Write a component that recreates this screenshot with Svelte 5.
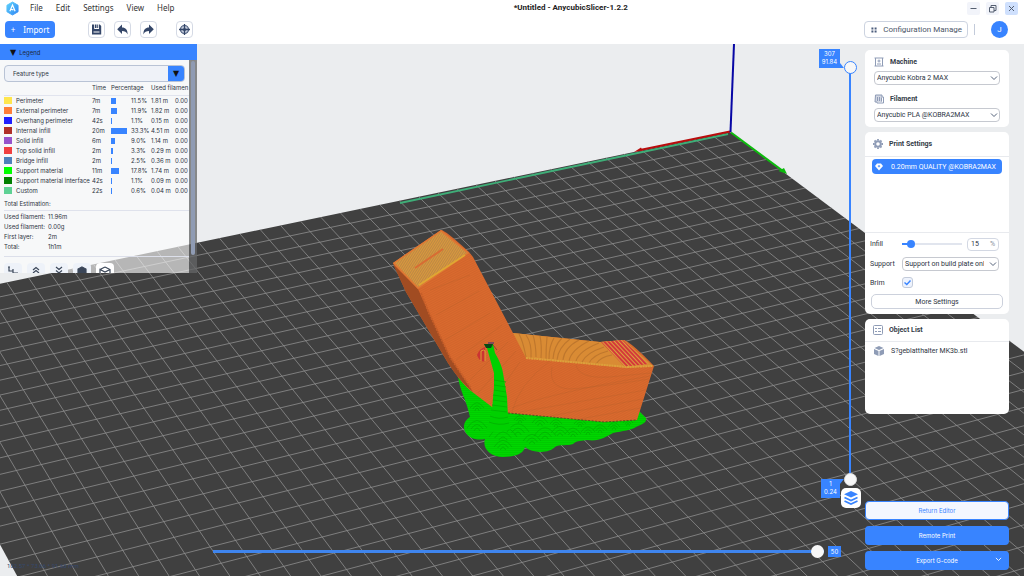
<script>
  const features = [
    { name: 'Perimeter', color: '#ffe64d', time: '7m', bar: 5, pct: '11.5%', len: '1.81 m' },
    { name: 'External perimeter', color: '#ff7d38', time: '7m', bar: 6, pct: '11.9%', len: '1.82 m' },
    { name: 'Overhang perimeter', color: '#1f1fff', time: '42s', bar: 1, pct: '1.1%', len: '0.15 m' },
    { name: 'Internal infill', color: '#b03029', time: '20m', bar: 16, pct: '33.3%', len: '4.51 m' },
    { name: 'Solid infill', color: '#9654cc', time: '6m', bar: 4, pct: '9.0%', len: '1.14 m' },
    { name: 'Top solid infill', color: '#f04040', time: '2m', bar: 2, pct: '3.3%', len: '0.29 m' },
    { name: 'Bridge infill', color: '#4d80ba', time: '2m', bar: 1, pct: '2.5%', len: '0.36 m' },
    { name: 'Support material', color: '#00ff00', time: '11m', bar: 8, pct: '17.8%', len: '1.74 m' },
    { name: 'Support material interface', color: '#008000', time: '42s', bar: 1, pct: '1.1%', len: '0.09 m' },
    { name: 'Custom', color: '#5ed194', time: '22s', bar: 1, pct: '0.6%', len: '0.04 m' }
  ];
  const totals = [
    ['Used filament:', '11.96m'],
    ['Used filament:', '0.00g'],
    ['First layer:', '2m'],
    ['Total:', '1h1m']
  ];

  // Perspective projection of the print bed: two vanishing points and a per-cell step.
  const origin = [730, 132];
  const vanishX = [6533, -1075];
  const vanishY = [-884, -1075];
  const stepX = -0.002995;
  const stepY = -0.0074;
  const cellsX = 43;
  const cellsY = 43;
  function project(u, v) {
    const a = stepX * u;
    const b = stepY * v;
    const w = 1 + a + b;
    return [0, 1].map((i) => (origin[i] + a * vanishX[i] + b * vanishY[i]) / w);
  }
  const pt = (u, v) => project(u, v).map((n) => n.toFixed(1)).join(' ');
  const bed = `M${pt(0, 0)}L${pt(cellsX, 0)}L${pt(cellsX, cellsY)}L${pt(0, cellsY)}Z`;
  let grid = '';
  for (let i = 1; i < cellsX; i++) grid += `M${pt(i, 0)}L${pt(i, cellsY)}`;
  for (let i = 1; i < cellsY; i++) grid += `M${pt(0, i)}L${pt(cellsX, i)}`;

  const blobs = [
    [477, 428, 10], [503, 437, 14], [500, 420, 8], [518, 432, 11], [532, 441, 9], [545, 436, 11],
    [540, 423, 8], [560, 433, 9], [573, 434, 8], [588, 432, 7], [600, 430, 7], [614, 427, 6],
    [628, 423, 5], [520, 420, 6], [477, 408, 7], [503, 447, 9], [556, 424, 6], [580, 424, 6]
  ];

  let topLayer = $state(307);
  let bottomLayer = $state(1);
  let move = $state(50);
  let infill = $state(15);
  let brim = $state(true);
</script>

<div class="app">
  <header>
    <div class="menubar">
      <svg class="logo" viewBox="0 0 14 15" aria-hidden="true">
        <defs><linearGradient id="lg" x1="0" x2="1" y2="1"><stop offset="0" stop-color="#5fd3fb" /><stop offset="1" stop-color="#2f86f5" /></linearGradient></defs>
        <path d="M7 .5 13 4v7L7 14.500 1 11V4Z" fill="url(#lg)" stroke="url(#lg)" stroke-linejoin="round" />
        <path d="M4.200 10.500 7 3.800 9.800 10.500M5.600 8.500 8 9" fill="none" stroke="#fff" stroke-width="1.300" />
      </svg>
      <nav><a href="#file">File</a><a href="#edit">Edit</a><a href="#settings">Settings</a><a href="#view">View</a><a href="#help">Help</a></nav>
      <h1>*Untitled - AnycubicSlicer-1.2.2</h1>
      <div class="win">
        <button aria-label="Minimize"><svg viewBox="0 0 13 13"><path d="M3.500 6.500h6" /></svg></button>
        <button aria-label="Restore"><svg viewBox="0 0 13 13"><path d="M3.500 5.500h4.500v4.500H3.500ZM5 5.500V3.500h5V8.500H8" /></svg></button>
        <button class="close" aria-label="Close"><svg viewBox="0 0 13 13"><path d="m4 4 5 5m0-5-5 5" /></svg></button>
      </div>
    </div>
    <div class="toolbar">
      <button class="import"><span>+</span>Import</button>
      <button class="tool" aria-label="Save"><svg viewBox="0 0 15 15"><path d="M3 2.500h2.200v4.500h4.800V2.500h.8l1.400 1.400v8.600H3ZM6 2.500h1.500v3.500H6ZM8.200 2.500h1v3.500h-1Z" fill="#344668" /><path d="M4.500 10h6" stroke="#fff" /></svg></button>
      <button class="tool" aria-label="Undo"><svg viewBox="0 0 15 15"><path d="M7 2.500v3c3.600 0 5.600 2 5.600 7-1.200-2.700-2.900-3.500-5.600-3.500v3L2.200 7.200Z" fill="#344668" /></svg></button>
      <button class="tool" aria-label="Redo"><svg viewBox="0 0 15 15"><path d="M8 2.500v3c-3.600 0-5.600 2-5.600 7 1.200-2.700 2.900-3.500 5.600-3.500v3l4.800-4.800Z" fill="#344668" /></svg></button>
      <button class="tool target" aria-label="Center view"><svg viewBox="0 0 15 15"><circle cx="7.500" cy="7.500" r="4" fill="#c3cbdb" stroke="#4b5c7c" stroke-width="1.200" /><path d="M7.500 2v11M2 7.500h11" stroke="#344668" stroke-width="1.300" /><circle cx="7.500" cy="7.500" r="1.600" fill="#344668" /></svg></button>
      <button class="config"><svg viewBox="0 0 7 7"><path d="M.5.500h2.300v2.300H.5ZM4.200.500h2.300v2.300H4.200ZM.5 4.200h2.300v2.300H.5ZM4.200 4.200h2.300v2.300H4.200Z" fill="#4b5c7c" /></svg>Configuration Manage</button>
      <i class="sep"></i>
      <button class="avatar">J</button>
    </div>
  </header>

  <main>
    <svg class="scene" viewBox="0 44 1024 532" preserveAspectRatio="xMinYMin slice" role="img" aria-label="Sliced model preview">
      <defs>
        <pattern id="layers" width="2" height="2" patternUnits="userSpaceOnUse" patternTransform="rotate(-28)"><rect width="2" height="2" fill="#da6a2e" /><rect width="2" height="1" fill="#d1652c" /></pattern>
        <pattern id="solid" width="2" height="2" patternUnits="userSpaceOnUse" patternTransform="rotate(-58)"><rect width="2" height="2" fill="#d99a3c" /><rect width="2" height="1" fill="#bd8746" /></pattern>
        <pattern id="redlines" width="3" height="3" patternUnits="userSpaceOnUse" patternTransform="rotate(47)"><rect width="3" height="3" fill="#dba13e" /><rect width="3" height="2" fill="#d5393a" /></pattern>
        <pattern id="rings" width="2" height="2" patternUnits="userSpaceOnUse"><rect width="2" height="2" fill="#00d600" /><rect width="2" height="1" fill="#00cb00" /></pattern>
      </defs>
      <rect x="0" y="44" width="1024" height="532" fill="#ebedef" />
      <path d={bed} fill="#404040" />
      <path d={grid} fill="none" stroke="#8e8e8e" stroke-width=".8" />
      <path d="M400 203 728 134" stroke="#3fae78" stroke-width="1.800" />
      <path d="M730 131.500 640 150" stroke="#b80c0c" stroke-width="1.800" />
      <path d="m634 152 7-4.500 1.500 3Z" fill="#b80c0c" />
      <path d="M730.500 132 734 44" stroke="#0707a5" stroke-width="2" />
      <path d="m731 132.500 52 38.500" stroke="#0cba0c" stroke-width="2" />
      <path d="m787 174-3-6-5.500 3Z" fill="#0cba0c" />

      <path d="M458 376C460 392 466 398 470 417 463 421 461 431 470 437 475 440 481 440 485 439 482 448 490 457 503 457 516 457 524 453 525 447 533 454 550 453 555 447 559 444 569 446 573 444 577 440 583 441 587 440 598 442 606 437 613 433 622 431 632 430 636 427 642 424 647 423 646 418L640 412 500 395Z" fill="url(#rings)" />
      <g fill="none" stroke="#009f00" stroke-width=".8" opacity=".6">
        {#each blobs as [x, y, r]}
          <path d="M{x - r} {y}Q{x} {y - r * 1.500} {x + r} {y}M{x - r * .6} {y + 1}Q{x} {y - r * .8} {x + r * .6} {y + 1}M{x - r * .3} {y + 3}Q{x} {y - 3} {x + r * .3} {y + 3}" />
        {/each}
      </g>
      <path d="M393 263 441 230Q445 230 469 252L473 257 513 333 600 342 624 340Q632 343 654 366L637 420 604 422 508 413 492 407 471 391Q462 384 448 363L406 292Z" fill="url(#layers)" />
      <path d="M393 264 418 289 429 313 450 357 473 392Q460 382 448 363L406 292Z" fill="#a14c22" />
      <path d="m421 293 8 20 21 44 21 31" fill="none" stroke="#c65e29" stroke-width="2" stroke-dasharray="2 1" />
      <path d="m394 263 47-32 27 22-50 35Z" fill="url(#solid)" stroke="#df7934" stroke-width="1.500" />
      <path d="m419 285 46-30" stroke="#e0a832" stroke-width="1.500" />
      <path d="m415 268 28-19" stroke="#d86c33" stroke-width="2" />
      <path d="m513 333 87 9 24-2 29 26-26 2-101-10Z" fill="#d98b34" />
      <g fill="none" stroke="#b5702b" stroke-width="1.100" opacity=".75">
        <path d="M519 334q4 7 7 23M526 335q6 8 5 23M533 335q3 10 3 22M540 336q2 10 1 22M547 337q-1 10-1 22M554 338q-5 8-5 21M562 338q-8 8-9 21M570 339q-12 9-13 21M579 340q-15 8-16 20M589 341q-18 9-20 20M599 343q-20 8-23 18M604 347q-18 6-22 15M608 351q-15 4-19 12M612 355q-12 2-16 9" />
      </g>
      <path d="m601 342 22-2 25 24-23 3Z" fill="url(#redlines)" />
      <path d="m526 358 101 9 26-1" fill="none" stroke="#dca13c" stroke-width="2" stroke-dasharray="2 .6" />
      <g fill="none" stroke="#a85c28" stroke-width=".8" opacity=".3">
        <path d="M512 412Q518 385 551 360M512 408Q530 400 600 385L650 376M552 367q-4 21 18 22 30-2 79-10M576 365q3 14 33 12l42-4M520 412l126-22M550 416l93-17M580 419l60-11M490 404l30-42M478 393l38-42M470 380l38-38M456 360l46-35M445 340l45-27M430 290l40-15M436 315l43-24" />
      </g>
      <path d="m508 413 96 9 33-2" fill="none" stroke="#5d4a25" stroke-dasharray="2 1.500" />
      <path d="M477 355q3-7 8-8v14q-5 2-8-6Z" fill="#cc3432" />
      <path d="M481 361V351q3-2 4 0v10" fill="none" stroke="#dc9f36" />
      <path d="M484 344h9l2 9q7 12 8 20l4 24 1 20 3 12-25 4 6-23 2-23v-14l-7-25Z" fill="#00d000" />
      <path d="m494 380 12 2M494 385l12 2M494 390l12 2M493 395l13 2M493 400l14 2M492 405l15 2M491 410l16 2M490 416q9 4 18 1M489 422q10 4 20 1" fill="none" stroke="#00b000" stroke-width=".8" />
      <path d="M484 344h9l-2 4h-5Z" fill="#094a16" /><path d="M488 343h6" stroke="#342a80" />
      <path d="m493 345 4 5" stroke="#8b4a2a" />
    </svg>

    <div class="left">
      <section class="legend">
        <h2><span>▼</span>Legend</h2>
        <div class="body">
          <div class="content">
            <div class="feature"><select aria-label="View"><option>Feature type</option></select><b>▼</b></div>
            <table>
              <colgroup><col class="name" /><col class="time" /><col class="bar" /><col class="num" /><col class="len" /><col class="wt" /></colgroup>
              <thead><tr><th></th><th>Time</th><th colspan="2">Percentage</th><th colspan="2">Used filamen</th></tr></thead>
              <tbody>
                {#each features as f}
                  <tr>
                    <td><i class="swatch" style="background:{f.color}"></i>{f.name}</td><td>{f.time}</td>
                    <td><i class="share" style="width:{f.bar}px"></i></td><td>{f.pct}</td><td>{f.len}</td><td>0.00</td>
                  </tr>
                {/each}
              </tbody>
            </table>
            <p class="est">Total Estimation:</p>
            <dl>{#each totals as [k, v]}<div><dt>{k}</dt><dd>{v}</dd></div>{/each}</dl>
            <div class="opts">
              <button aria-label="Travel"><svg viewBox="0 0 18 18"><path d="M5 4v4h4v2h5M4 4h2M9 6v2" /></svg></button>
              <button aria-label="Retract"><svg viewBox="0 0 18 18"><path d="m6 7 3-2.500L12 7M6 10l3-2.500 3 2.500" /></svg></button>
              <button aria-label="Deretract"><svg viewBox="0 0 18 18"><path d="m6 4 3 2.500L12 4M6 7.500l3 2.500 3-2.500" /></svg></button>
              <button aria-label="Shells"><svg viewBox="0 0 18 18"><path d="m9 4 4 2v5l-4 2-4-2V6Z" fill="#3b4658" /></svg></button>
              <button class="on" aria-label="Tool"><svg viewBox="0 0 18 18"><path d="m9 4 5 2.500v6L9 15l-5-2.500v-6L9 9l5-2.500M4 6.500 9 4" /></svg></button>
            </div>
          </div>
          <div class="scroll"><i></i></div>
        </div>
      </section>
      <p class="dims">102.57 * 73.66 * 91.66 mm</p>
    </div>

    <div class="center">
      <div class="vslider">
        <output class="tag top">307<br />91.84</output>
        <div class="rail">
          <input class="upper" type="range" min="1" max="307" bind:value={topLayer} aria-label="Top layer" />
          <input type="range" min="1" max="307" bind:value={bottomLayer} aria-label="Bottom layer" />
        </div>
        <output class="tag bottom">1<br />0.24</output>
        <button class="layers" aria-label="Layers"><svg viewBox="0 0 20 20"><path d="m10 3 7 3.200L10 9.400 3 6.200Z" fill="#3884ff" /><path d="m3.500 9.500 6.500 3 6.500-3M3.500 13l6.500 3 6.500-3" fill="none" stroke="#3884ff" stroke-width="1.700" /></svg></button>
      </div>
      <div class="hslider">
        <input type="range" min="0" max="50" bind:value={move} aria-label="Move" />
        <output>{move}</output>
      </div>
    </div>

    <aside>
      <section class="card">
        <h3><svg viewBox="0 0 10 10"><path d="M.5 1h9M1.500 1v8M8.500 1v8M.5 9h9M3.500 4h3M5 2.500v3M3 7h4" /></svg><label for="machine">Machine</label></h3>
        <div class="sel"><select id="machine"><option>Anycubic Kobra 2 MAX</option></select><svg viewBox="0 0 8 5"><path d="m1 .5 3 3 3-3" /></svg></div>
        <h3 class="second"><svg viewBox="0 0 10 10"><path d="M1.500 1h6.500v2h1.500v6H3V8H1ZM3.500 3v4M5.500 3v4M7.500 3.500v4" /><path d="M1 1h7v7H1Z" fill="#8f9cb6" opacity=".4" stroke="none" /></svg><label for="filament">Filament</label></h3>
        <div class="sel"><select id="filament"><option>Anycubic PLA @KOBRA2MAX</option></select><svg viewBox="0 0 8 5"><path d="m1 .5 3 3 3-3" /></svg></div>
      </section>

      <section class="card print">
        <h3><svg viewBox="0 0 10 10"><circle cx="5" cy="5" r="2.800" stroke-width="2" /><path d="M5 0v1.500M5 8.500V10M0 5h1.500M8.500 5H10M1.500 1.500l1 1M7.500 7.500l1 1M8.500 1.500l-1 1M2.500 7.500l-1 1" stroke-width="1.800" /></svg>Print Settings</h3>
        <div class="presets">
          <button><svg viewBox="0 0 8 8"><path d="M2 .5h4l2 2.500-4 4.500L0 3Z" fill="#fff" /><path d="M2.800 3.200h2.400M4 2v2.400" stroke="#3884ff" stroke-width=".8" /></svg>0.20mm QUALITY @KOBRA2MAX</button>
        </div>
        <div class="row infill"><label for="infill">Infill</label><input id="infill" type="range" min="0" max="160" bind:value={infill} /><span class="pctbox"><input type="text" bind:value={infill} aria-label="Infill percent" />%</span></div>
        <div class="row support"><label for="support">Support</label><div class="sel"><select id="support"><option>Support on build plate only</option></select><svg viewBox="0 0 8 5"><path d="m1 .5 3 3 3-3" /></svg></div></div>
        <div class="row brim"><label for="brim">Brim</label><input id="brim" type="checkbox" bind:checked={brim} /></div>
        <button class="more">More Settings</button>
      </section>

      <section class="card objects">
        <h3><svg viewBox="0 0 10 10"><rect x=".5" y=".5" width="9" height="9" rx="1" /><path d="M2 3.500h2M5 3.500h3M2 6.500h2M5 6.500h3" /></svg>Object List</h3>
        <p><svg viewBox="0 0 10 10"><path d="m5 0 4.500 2L5 4 .5 2ZM0 3l4.500 2v5L0 8ZM10 3 5.500 5v5L10 8Z" fill="#8f9cb6" /></svg>S?geblatthalter MK3b.stl</p>
      </section>

      <div class="actions">
        <button class="return">Return Editor</button>
        <button>Remote Print</button>
        <button>Export G-code<svg viewBox="0 0 8 5"><path d="m1 1 3 3 3-3" /></svg></button>
      </div>
    </aside>
  </main>
</div>

<style>
  :global(body) { margin: 0; }
  * { box-sizing: border-box; }
  .app { min-height: 100vh; display: flex; flex-direction: column; font: 7px/10px Roboto, "Noto Sans", sans-serif; color: #2c3442; background: #fff; }
  button, input, select { font: inherit; color: inherit; margin: 0; padding: 0; border: 0; background: none; }
  h1, h2, h3, p, dl, dd { margin: 0; font-size: inherit; font-weight: inherit; }
  header { height: 44px; font-size: 8px; }
  .menubar { display: flex; align-items: center; height: 16px; padding: 0 6px; }
  .logo { width: 13px; height: 15px; }
  nav { display: flex; gap: 13px; padding-left: 11px; font-family: "Noto Sans", sans-serif; }
  nav a { color: #333; text-decoration: none; }
  h1 { flex: 1; text-align: center; font-size: 8px; font-weight: 700; color: #222; }
  .win { display: flex; gap: 6px; }
  .win button { width: 13px; height: 13px; border-radius: 2px; background: #f2f4fa; }
  .win .close { background: #cfe0fd; }
  .win svg, .tool svg { display: block; width: 100%; fill: none; stroke: #555f70; }
  .tool svg { stroke: none; }
  .toolbar { display: flex; align-items: center; height: 27px; padding: 0 16px 0 5px; gap: 9px; }
  .import { width: 50px; height: 17px; border-radius: 4px; background: #3884ff; color: #fff; font-family: "Noto Sans", sans-serif; margin-right: 24px; display: flex; align-items: center; justify-content: center; gap: 8px; }
  .tool { width: 17px; height: 17px; border: 1px solid #d5dae5; border-radius: 4px; }
  .target { margin-left: 10px; }
  .config { margin-left: auto; height: 17px; padding: 0 5px 0 6px; border: 1px solid #ccd3e0; border-radius: 4px; display: flex; align-items: center; gap: 6px; color: #4b5568; }
  .config svg { width: 6px; }
  .sep { width: 1px; height: 11px; background: #c3cbda; margin: 0 7px 0 -3px; }
  .avatar { width: 17px; height: 17px; border-radius: 50%; background: #3884ff; color: #fff; }

  main { flex: 1; display: flex; position: relative; padding-right: 15px; overflow: hidden; background: #ebedef; }
  .scene { position: absolute; inset: 0; width: 100%; height: 100%; }
  .left, .center, aside { position: relative; }
  .left { width: 197px; display: flex; flex-direction: column; justify-content: space-between; }
  .legend, .tag, .hslider, .actions { font-family: Inter, "Noto Sans", sans-serif; font-size: 6px; }
  .legend h2 { height: 16px; line-height: 17px; padding-left: 10px; background: #3884ff; color: #1d2940; display: flex; gap: 3px; }
  .legend span, .legend b { font-family: "DejaVu Sans", sans-serif; font-size: 8px; color: #111; }
  .body { display: flex; height: 213px; overflow: hidden; }
  .content { width: 189px; padding: 5px 0 0 4px; background: rgba(255, 255, 255, .62); overflow: hidden; white-space: nowrap; }
  .scroll { width: 8px; padding: 1px 2px; background: rgba(100, 101, 103, .75); }
  .scroll i { display: block; height: 194px; border-radius: 3px; background: #8f9bb3; }
  .feature { display: flex; width: 181px; height: 17px; border: 1px solid #b9c3d5; border-radius: 4px; background: #eff2f8; overflow: hidden; }
  .feature select { flex: 1; appearance: none; padding-left: 8px; }
  .feature b { width: 16px; background: #3884ff; text-align: center; line-height: 15px; font-weight: 400; }
  table { width: 185px; table-layout: fixed; border-collapse: collapse; }
  th, td { padding: 0; height: 10px; line-height: 10px; text-align: left; font-weight: 400; }
  th { height: 13px; border-bottom: 1px solid #e1e4ee; }
  .name { width: 88px; }
  .time { width: 19px; }
  .bar { width: 20px; }
  .num { width: 20px; }
  .len { width: 24px; }
  .wt { width: 14px; }
  .swatch { display: inline-block; width: 8px; height: 7px; margin-right: 4px; vertical-align: -1px; }
  .share { display: block; height: 6px; background: #3884ff; }
  .est { height: 15px; line-height: 16px; border-bottom: 1px solid #dfe2ec; }
  dl { padding: 1px 0 4px; border-bottom: 1px solid #dcdfea; }
  dl div { display: flex; }
  dt { width: 44px; }
  .opts { display: flex; gap: 5px; padding-top: 6px; }
  .opts button { width: 18px; height: 18px; border-radius: 4px; background: #eef2f9; }
  .opts .on { background: #fff; }
  .opts svg { display: block; width: 18px; fill: none; stroke: #3b4658; stroke-width: 1.200; }
  .dims { padding: 0 0 5px 7px; font-size: 6px; color: #35486d; }

  .center { flex: 1; min-width: 0; display: flex; flex-direction: column; gap: 37px; padding: 5px 4px 18px 16px; }
  .vslider { flex: 1; align-self: flex-end; width: 42px; display: flex; flex-direction: column; position: relative; }
  .rail { flex: 1; width: 14px; margin: -7px 4px -7px auto; position: relative; }
  .rail::before { content: ""; position: absolute; left: 6px; top: 8px; bottom: 8px; width: 2px; background: #3884ff; }
  .rail input { position: absolute; inset: 0; width: 14px; height: 100%; appearance: none; writing-mode: vertical-lr; direction: rtl; pointer-events: none; }
  .rail input::-webkit-slider-thumb { appearance: none; pointer-events: auto; width: 13px; height: 13px; border-radius: 50%; background: #f7f7f7; border: 1px solid #ddd; }
  .rail .upper::-webkit-slider-thumb { border: 1px solid #3884ff; }
  .tag { position: relative; width: 21px; height: 19px; padding-top: 1px; text-align: center; line-height: 8px; background: #3884ff; color: #fff; }
  .tag::after { content: ""; position: absolute; left: 100%; width: 4px; height: 5px; background: #3884ff; }
  .top::after { bottom: 0; clip-path: polygon(0 0, 100% 100%, 0 100%); }
  .bottom::after { top: 0; clip-path: polygon(0 0, 100% 0, 0 100%); }
  .tag.bottom { width: 19px; margin-left: 2px; }
  .layers { width: 20px; height: 20px; border-radius: 5px; background: #fff; margin: -10px 0 0 auto; position: relative; }
  .layers svg { display: block; }
  .hslider { display: flex; align-items: center; height: 13px; margin-right: 20px; gap: 4px; }
  .hslider input { flex: 1; min-width: 0; height: 13px; appearance: none; background: linear-gradient(#3f85ee, #3f85ee) center / 100% 3px no-repeat; }
  .hslider input::-webkit-slider-thumb { appearance: none; width: 13px; height: 13px; border-radius: 50%; background: #f7f7f7; }
  .hslider output { width: 13px; height: 11px; line-height: 11px; text-align: center; color: #fff; background: #3884ff; }

  aside { width: 144px; display: flex; flex-direction: column; gap: 5px; padding: 6px 0; }
  .card { background: #fff; border-radius: 5px; padding: 6px 9px 5px; }
  h3 { display: flex; align-items: center; gap: 6px; height: 11px; font-weight: 700; color: #333b47; }
  h3 svg { width: 10px; height: 10px; fill: none; stroke: #8f9cb6; }
  .card h3 { margin-bottom: 4px; }
  .card .second { margin-top: 8px; }
  .sel { position: relative; height: 14px; }
  .sel select { display: block; appearance: none; width: 100%; height: 14px; padding: 0 14px 0 2px; border: 1px solid #c6c9d0; border-radius: 4px; background: #fff; }
  .sel svg { position: absolute; right: 2px; top: 5px; width: 8px; fill: none; stroke: #55627a; pointer-events: none; }
  .print, .objects { padding: 0 0 5px; }
  .print h3, .objects h3 { height: 24px; margin: 0; padding-left: 8px; }
  .presets { height: 77px; border: solid #e8eaee; border-width: 1px 0; padding: 2px 7px; }
  .presets button { width: 100%; height: 15px; display: flex; align-items: center; gap: 8px; padding-left: 3px; border-radius: 4px; background: #3884ff; color: #fff; white-space: nowrap; }
  .presets svg { width: 8px; }
  .row { display: flex; align-items: center; padding: 0 10px 0 5px; }
  .row label { width: 32px; }
  .infill { height: 22px; }
  .infill > input { width: 60px; height: 8px; appearance: none; background: linear-gradient(90deg, #3884ff 13%, #e1e5ee 13%) center / 100% 2px no-repeat; margin-right: 5px; }
  .infill > input::-webkit-slider-thumb { appearance: none; width: 8px; height: 8px; border-radius: 50%; background: #3884ff; }
  .pctbox { display: flex; align-items: center; flex: 1; height: 13px; border: 1px solid #d3d8e3; border-radius: 4px; color: #8890a0; }
  .pctbox input { width: 22px; padding-left: 3px; color: #2c3442; }
  .support { height: 18px; }
  .support .sel { flex: 1; min-width: 0; }
  .brim { height: 19px; }
  .brim input { appearance: none; width: 11px; height: 11px; border: 1px solid #c3cbda; border-radius: 3px; background: #eef3fd; }
  .brim input:checked { background: #eef3fd url("data:image/svg+xml,%3Csvg xmlns='http://www.w3.org/2000/svg' viewBox='0 0 9 9'%3E%3Cpath d='m1.500 4.500 2.300 2 3.700-4' fill='none' stroke='%233884ff' stroke-width='1.400'/%3E%3C/svg%3E"); }
  .more { display: block; width: 132px; height: 15px; margin: 2px auto 0; border: 1px solid #ccd1dc; border-radius: 5px; }
  .objects { height: 95px; }
  .objects h3 { height: 23px; border-bottom: 1px solid #e8eaee; }
  .objects p { display: flex; gap: 7px; padding: 4px 9px; }
  .objects p svg { width: 10px; }
  .actions { margin-top: auto; display: flex; flex-direction: column; gap: 6px; }
  .actions button { position: relative; height: 19px; border-radius: 4px; background: #3884ff; color: #fff; }
  .actions .return { background: #f3f7ff; color: #3884ff; border: 1px solid #3884ff; }
  .actions svg { position: absolute; right: 7px; top: 6px; width: 7px; fill: none; stroke: #fff; }
</style>
